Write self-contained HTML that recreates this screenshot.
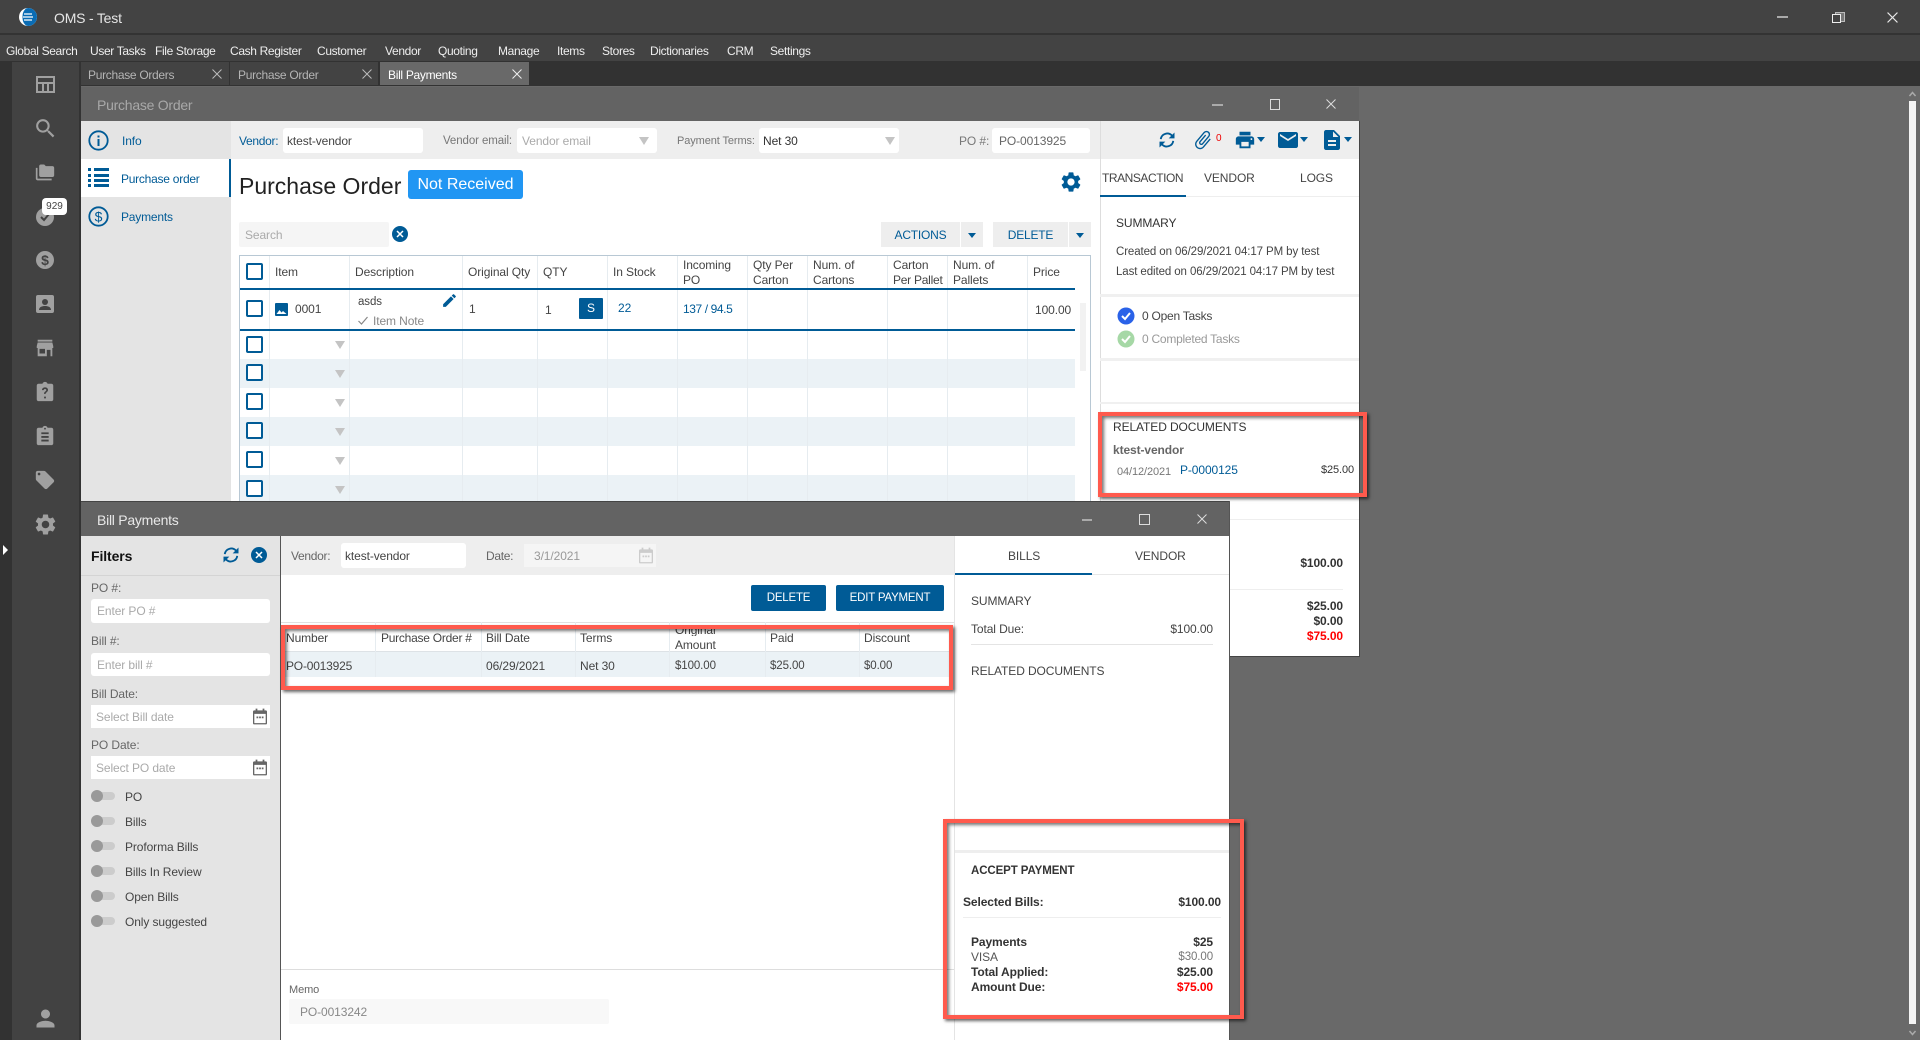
<!DOCTYPE html>
<html><head><meta charset="utf-8"><title>OMS - Test</title>
<style>
html,body{margin:0;padding:0;width:1920px;height:1040px;overflow:hidden;background:#696969}
body{position:relative;font:12px/16px "Liberation Sans",sans-serif;color:#333}
.b,.t,svg.i{position:absolute}
.t{white-space:nowrap;letter-spacing:-.1px}
.m{color:#eee;top:43px;letter-spacing:-.35px}
.tb{top:67px;color:#b5b5b5;letter-spacing:-.3px}
.w{background:#fff}
.inp{position:absolute;background:#fff;border-radius:3px}
.bl{color:#005b96}
.g{color:#999}
.h{color:#444}
.cb{position:absolute;left:246px;width:13px;height:13px;border:2.5px solid #005b96;border-radius:2px;background:#fff}
.v{position:absolute;width:1px;background:#e6ecf0}
.tri{position:absolute;width:0;height:0;border-left:5px solid transparent;border-right:5px solid transparent;border-top:8px solid #c4c4c4}
.car{position:absolute;width:0;height:0;border-left:4px solid transparent;border-right:4px solid transparent;border-top:5px solid #005b96}
.red{position:absolute;border:4px solid #ff5a4d;box-sizing:border-box;box-shadow:2px 2px 3px rgba(0,0,0,.6),inset 2px 2px 3px rgba(0,0,0,.55)}
.tg{position:absolute;left:91px;width:24px;height:8px;background:#ccc;border-radius:4px}
.tg:before{content:"";position:absolute;left:0;top:-2px;width:12px;height:12px;border-radius:6px;background:#999}
.btn{position:absolute;background:#005b96;color:#fff;text-align:center;line-height:27px;border-radius:2px;letter-spacing:-.2px}
.gb{position:absolute;background:#eee;color:#005b96;text-align:center;line-height:26px;letter-spacing:-.2px}
</style></head><body>
<svg width="0" height="0" style="position:absolute"><defs>
<symbol id="search" viewBox="0 0 24 24"><path d="M15.5 14h-.79l-.28-.27A6.47 6.47 0 0 0 16 9.5 6.5 6.5 0 1 0 9.5 16c1.61 0 3.09-.59 4.23-1.57l.27.28v.79l5 4.99L20.49 19l-4.99-5zm-6 0C7.01 14 5 11.99 5 9.5S7.01 5 9.5 5 14 7.01 14 9.5 11.99 14 9.5 14z"/></symbol>
<symbol id="folder" viewBox="0 0 24 24"><path d="M3 7H1v13c0 1.1.9 2 2 2h17v-2H3V7zm18-2h-8l-2-2H7c-1.1 0-2 .9-2 2v11c0 1.1.9 2 2 2h14c1.1 0 2-.9 2-2V7c0-1.1-.9-2-2-2z"/></symbol>
<symbol id="person" viewBox="0 0 24 24"><path d="M12 12c2.21 0 4-1.79 4-4s-1.79-4-4-4-4 1.79-4 4 1.79 4 4 4zm0 2c-2.67 0-8 1.34-8 4v2h16v-2c0-2.66-5.33-4-8-4z"/></symbol>
<symbol id="gear" viewBox="0 0 24 24"><path d="M19.14 12.94c.04-.3.06-.61.06-.94 0-.32-.02-.64-.07-.94l2.03-1.58a.49.49 0 0 0 .12-.61l-1.92-3.32a.488.488 0 0 0-.59-.22l-2.39.96c-.5-.38-1.03-.7-1.62-.94l-.36-2.54a.484.484 0 0 0-.48-.41h-3.84c-.24 0-.43.17-.47.41l-.36 2.54c-.59.24-1.13.57-1.62.94l-2.39-.96c-.22-.08-.47 0-.59.22L2.74 8.87c-.12.21-.08.47.12.61l2.03 1.58c-.05.3-.09.63-.09.94s.02.64.07.94l-2.03 1.58a.49.49 0 0 0-.12.61l1.92 3.32c.12.22.37.29.59.22l2.39-.96c.5.38 1.03.7 1.62.94l.36 2.54c.05.24.24.41.48.41h3.84c.24 0 .44-.17.47-.41l.36-2.54c.59-.24 1.13-.56 1.62-.94l2.39.96c.22.08.47 0 .59-.22l1.92-3.32c.12-.22.07-.47-.12-.61l-2.01-1.58zM12 15.6c-1.98 0-3.6-1.62-3.6-3.6s1.62-3.6 3.6-3.6 3.6 1.62 3.6 3.6-1.62 3.6-3.6 3.6z"/></symbol>
<symbol id="store" viewBox="0 0 24 24"><path d="M20 3H4v2h16V3zm1 9v-2l-1-4H4l-1 4v2h1v9h10v-7h4v7h2v-9h1zm-9 6H6v-5h6v5z"/></symbol>
<symbol id="clip" viewBox="0 0 24 24"><path d="M19 3h-4.18C14.4 1.84 13.3 1 12 1c-1.3 0-2.4.84-2.82 2H5c-1.1 0-2 .9-2 2v15c0 1.1.9 2 2 2h14c1.1 0 2-.9 2-2V5c0-1.1-.9-2-2-2zm-7 0c.55 0 1 .45 1 1s-.45 1-1 1-1-.45-1-1 .45-1 1-1zm4 15H8v-2h8v2zm0-4H8v-2h8v2zm0-4H8V8h8v2z"/></symbol>
<symbol id="clipq" viewBox="0 0 24 24"><path fill-rule="evenodd" d="M19 3h-4.18C14.4 1.84 13.3 1 12 1c-1.3 0-2.4.84-2.82 2H5c-1.1 0-2 .9-2 2v15c0 1.1.9 2 2 2h14c1.1 0 2-.9 2-2V5c0-1.1-.9-2-2-2zM11 17h2v2h-2zM12 7c-2 0-3.200 1.200-3.300 3h1.800c.1-.8.6-1.300 1.500-1.300s1.400.5 1.400 1.200c0 1.400-2.500 1.600-2.500 4.100h1.800c0-1.700 2.600-2.100 2.600-4.200C15.300 8.100 14 7 12 7z"/></symbol>
<symbol id="tag" viewBox="0 0 24 24"><path d="M21.41 11.58l-9-9C12.05 2.22 11.55 2 11 2H4c-1.1 0-2 .9-2 2v7c0 .55.22 1.05.59 1.42l9 9c.36.36.86.58 1.41.58.55 0 1.05-.22 1.41-.59l7-7c.37-.36.59-.86.59-1.41 0-.55-.23-1.06-.59-1.42zM5.5 7C4.67 7 4 6.33 4 5.500S4.670 4 5.500 4 7 4.670 7 5.500 6.330 7 5.500 7z"/></symbol>
<symbol id="print" viewBox="0 0 24 24"><path d="M19 8H5c-1.66 0-3 1.340-3 3v6h4v4h12v-4h4v-6c0-1.660-1.340-3-3-3zm-3 11H8v-5h8v5zm3-7c-.55 0-1-.45-1-1s.45-1 1-1 1 .45 1 1-.45 1-1 1zm-1-9H6v4h12V3z"/></symbol>
<symbol id="mail" viewBox="0 0 24 24"><path d="M20 4H4c-1.100 0-1.990.9-1.990 2L2 18c0 1.100.9 2 2 2h16c1.100 0 2-.9 2-2V6c0-1.100-.9-2-2-2zm0 4l-8 5-8-5V6l8 5 8-5v2z"/></symbol>
<symbol id="doc" viewBox="0 0 24 24"><path d="M14 2H6c-1.100 0-1.990.9-1.990 2L4 20c0 1.100.89 2 1.990 2H18c1.100 0 2-.9 2-2V8l-6-6zm2 16H8v-2h8v2zm0-4H8v-2h8v2zm-3-5V3.500L18.500 9H13z"/></symbol>
<symbol id="sync" viewBox="0 0 24 24"><path d="M4.500 11A7.800 7.800 0 0 1 18 6.800M19.500 13A7.800 7.800 0 0 1 6 17.200" fill="none" stroke="currentColor" stroke-width="2.200"/><path d="M21 3v7h-7zM3 21v-7h7z" fill="currentColor"/></symbol>
<symbol id="attach" viewBox="0 0 24 24"><path d="M16.500 6v11.500c0 2.210-1.790 4-4 4s-4-1.790-4-4V5c0-1.380 1.120-2.500 2.500-2.500s2.500 1.120 2.500 2.500v10.500c0 .55-.45 1-1 1s-1-.45-1-1V6H10v9.500c0 1.380 1.120 2.500 2.500 2.500s2.500-1.120 2.500-2.500V5c0-2.210-1.790-4-4-4S7 2.790 7 5v12.500c0 3.040 2.460 5.500 5.500 5.500s5.500-2.460 5.500-5.500V6h-1.500z"/></symbol>
<symbol id="edit" viewBox="0 0 24 24"><path d="M3 17.250V21h3.750L17.810 9.940l-3.750-3.750L3 17.250zM20.710 7.040a1 1 0 0 0 0-1.410l-2.340-2.340a1 1 0 0 0-1.410 0l-1.830 1.830 3.750 3.750 1.830-1.830z"/></symbol>
<symbol id="cal" viewBox="0 0 16 18"><path d="M3 0h2v2h6V0h2v2h1.500A1.500 1.500 0 0 1 16 3.500v13a1.500 1.500 0 0 1-1.500 1.500h-13A1.500 1.500 0 0 1 0 16.500v-13A1.500 1.500 0 0 1 1.500 2H3V0zM1.500 6v10.500h13V6h-13zM4 9h2v2H4zm3 0h2v2H7zm3 0h2v2h-2z"/></symbol>
<symbol id="x" viewBox="0 0 10 10"><path d="M.5.5l9 9M9.500.5l-9 9" stroke="currentColor" stroke-width="1" fill="none"/></symbol>
</defs></svg>

<!-- title bar -->
<div class="b" style="left:0;top:0;width:1920px;height:34px;background:#434343"></div>
<div class="b" style="left:0;top:33px;width:1920px;height:2px;background:#333"></div>
<svg class="i" style="left:18px;top:7px" width="20" height="20" viewBox="0 0 20 20"><circle cx="10" cy="10" r="9" fill="#fff"/><path d="M8 1.500A9 9 0 0 1 10 1a9 9 0 0 1 0 18 9 9 0 0 1-2-.5C5 16 4.500 13 4.500 10S5 4 8 1.500z" fill="#0a6cb4"/><path d="M6 7h8M5 10h10M6 13h8" stroke="#fff" stroke-width="1.200"/></svg>
<div class="t" style="left:54px;top:10px;font-size:14px;color:#e6e6e6;letter-spacing:-.2px">OMS - Test</div>
<div class="b" style="left:1777px;top:16px;width:11px;height:2px;background:#aaa"></div>
<div class="b" style="left:1835px;top:12px;width:8px;height:8px;border:1px solid #bbb;background:#777"></div>
<div class="b" style="left:1832px;top:14px;width:7px;height:7px;border:1.500px solid #eee;background:#434343"></div>
<svg class="i" style="left:1887px;top:12px;color:#e8e8e8" width="11" height="11"><use href="#x"/></svg>

<!-- menu -->
<div class="b" style="left:0;top:35px;width:1920px;height:26px;background:#434343"></div>
<div class="t m" style="left:6px">Global Search</div>
<div class="t m" style="left:90px">User Tasks</div>
<div class="t m" style="left:155px">File Storage</div>
<div class="t m" style="left:230px">Cash Register</div>
<div class="t m" style="left:317px">Customer</div>
<div class="t m" style="left:385px">Vendor</div>
<div class="t m" style="left:438px">Quoting</div>
<div class="t m" style="left:498px">Manage</div>
<div class="t m" style="left:557px">Items</div>
<div class="t m" style="left:602px">Stores</div>
<div class="t m" style="left:650px">Dictionaries</div>
<div class="t m" style="left:727px">CRM</div>
<div class="t m" style="left:770px">Settings</div>

<!-- tab band -->
<div class="b" style="left:0;top:61px;width:1920px;height:25px;background:#323232"></div>
<div class="b" style="left:80px;top:62px;width:149px;height:23px;background:#434343"></div>
<div class="b" style="left:230px;top:62px;width:148px;height:23px;background:#434343"></div>
<div class="b" style="left:380px;top:62px;width:149px;height:23px;background:#696969"></div>
<div class="t tb" style="left:88px">Purchase Orders</div>
<div class="t tb" style="left:238px">Purchase Order</div>
<div class="t tb" style="left:388px;color:#fff">Bill Payments</div>
<svg class="i" style="left:212px;top:69px;color:#bbb" width="10" height="10"><use href="#x"/></svg>
<svg class="i" style="left:362px;top:69px;color:#bbb" width="10" height="10"><use href="#x"/></svg>
<svg class="i" style="left:512px;top:69px;color:#eee" width="10" height="10"><use href="#x"/></svg>

<!-- rail -->
<div class="b" style="left:0;top:61px;width:12px;height:979px;background:#323232"></div>
<div class="b" style="left:12px;top:62px;width:68px;height:978px;background:#424242"></div>
<div class="b" style="left:79px;top:62px;width:2px;height:978px;background:#333"></div>
<svg class="i" style="left:36px;top:76px" width="19" height="17" viewBox="0 0 19 17"><path fill="#a0a0a0" fill-rule="evenodd" d="M0 0h19v17H0zM2 2v4h15V2zM2 8v7h4V8zm6 0v7h3V8zm5 0v7h4V8z"/></svg>
<svg class="i" style="left:33px;top:116px" width="25" height="25" fill="#a0a0a0"><use href="#search"/></svg>
<svg class="i" style="left:35px;top:162px" width="20" height="20" fill="#a0a0a0"><use href="#folder"/></svg>
<svg class="i" style="left:36px;top:208px" width="18" height="18" viewBox="0 0 18 18"><circle cx="9" cy="9" r="9" fill="#a0a0a0"/><path d="M5 9l3 3 5-6" stroke="#424242" stroke-width="2" fill="none"/></svg>
<div class="b" style="left:42px;top:198px;width:25px;height:17px;background:#fff;border-radius:4px;text-align:center;font-size:10px;line-height:17px;color:#444">929</div>
<svg class="i" style="left:36px;top:251px" width="18" height="18" viewBox="0 0 18 18"><circle cx="9" cy="9" r="9" fill="#a0a0a0"/><text x="9" y="14" text-anchor="middle" font-family="Liberation Sans" font-size="14" font-weight="bold" fill="#424242">$</text></svg>
<svg class="i" style="left:36px;top:295px" width="18" height="18" viewBox="0 0 18 18"><rect width="18" height="18" rx="2" fill="#a0a0a0"/><circle cx="9" cy="7" r="3" fill="#424242"/><path d="M3 15c0-3 3-4 6-4s6 1 6 4z" fill="#424242"/></svg>
<svg class="i" style="left:34px;top:337px" width="22" height="22" fill="#a0a0a0"><use href="#store"/></svg>
<svg class="i" style="left:34px;top:381px" width="22" height="22" fill="#a0a0a0"><use href="#clipq"/></svg>
<svg class="i" style="left:34px;top:425px" width="22" height="22" fill="#a0a0a0"><use href="#clip"/></svg>
<svg class="i" style="left:34px;top:469px" width="22" height="22" fill="#a0a0a0"><use href="#tag"/></svg>
<svg class="i" style="left:33px;top:512px" width="25" height="25" fill="#a0a0a0"><use href="#gear"/></svg>
<svg class="i" style="left:32px;top:1005px" width="27" height="27" fill="#a0a0a0"><use href="#person"/></svg>
<div class="b" style="left:3px;top:545px;width:0;height:0;border-top:5px solid transparent;border-bottom:5px solid transparent;border-left:5px solid #fff"></div>

<!-- page scrollbar -->
<div class="b" style="left:1909px;top:101px;width:7px;height:923px;background:#f4f4f4"></div>
<svg class="i" style="left:1909px;top:91px" width="7" height="6"><path d="M.5 5L3.500 1.500 6.500 5" stroke="#aaa" stroke-width="1.500" fill="none"/></svg>
<svg class="i" style="left:1909px;top:1030px" width="7" height="6"><path d="M.5 1L3.500 4.500 6.500 1" stroke="#aaa" stroke-width="1.500" fill="none"/></svg>

<!-- PO window -->
<div class="b" style="left:81px;top:87px;width:1278px;height:34px;background:#636363"></div>
<div class="t" style="left:97px;top:97px;font-size:14px;color:#a8a8a8;letter-spacing:-.25px">Purchase Order</div>
<div class="b" style="left:1212px;top:104px;width:11px;height:2px;background:#aaa"></div>
<div class="b" style="left:1270px;top:99px;width:8px;height:9px;border:1px solid #ddd"></div>
<svg class="i" style="left:1326px;top:99px;color:#ddd" width="10" height="10"><use href="#x"/></svg>

<div class="b" style="left:81px;top:121px;width:150px;height:380px;background:#e4e4e4"></div>
<div class="b" style="left:81px;top:159px;width:149px;height:38px;background:#fff"></div>
<div class="b" style="left:229px;top:159px;width:2px;height:38px;background:#005b96"></div>
<svg class="i" style="left:88px;top:130px" width="21" height="21" viewBox="0 0 21 21"><circle cx="10.500" cy="10.500" r="9.200" fill="none" stroke="#005b96" stroke-width="1.800"/><rect x="9.500" y="9" width="2" height="7" fill="#005b96"/><rect x="9.500" y="5.500" width="2" height="2" fill="#005b96"/></svg>
<svg class="i" style="left:88px;top:168px" width="21" height="20" viewBox="0 0 21 20"><path fill="#005b96" d="M0 0h3v3H0zm6 0h15v3H6zM0 6h3v3H0zm6 0h15v3H6zM0 11h3v3H0zm6 0h15v3H6zM0 16h3v3H0zm6 0h15v3H6z"/></svg>
<svg class="i" style="left:88px;top:206px" width="21" height="21" viewBox="0 0 21 21"><circle cx="10.500" cy="10.500" r="9.200" fill="none" stroke="#005b96" stroke-width="1.800"/><text x="10.500" y="15.500" text-anchor="middle" font-family="Liberation Sans" font-size="14" fill="#005b96">$</text></svg>
<div class="t bl" style="left:122px;top:133px">Info</div>
<div class="t bl" style="left:121px;top:171px;letter-spacing:-.25px">Purchase order</div>
<div class="t bl" style="left:121px;top:209px;letter-spacing:-.2px">Payments</div>

<div class="b w" style="left:231px;top:121px;width:1128px;height:536px"></div>
<div class="b" style="left:231px;top:121px;width:869px;height:38px;background:#eee"></div>
<div class="b" style="left:1100px;top:121px;width:259px;height:38px;background:#eee"></div>
<div class="b" style="left:1100px;top:121px;width:1px;height:380px;background:#ddd"></div>
<div class="t bl" style="left:239px;top:133px;letter-spacing:-.3px">Vendor:</div>
<div class="inp" style="left:283px;top:128px;width:140px;height:25px"></div>
<div class="t" style="left:287px;top:133px;color:#444">ktest-vendor</div>
<div class="t" style="left:443px;top:133px;color:#777;font-size:11.500px">Vendor email:</div>
<div class="inp" style="left:517px;top:128px;width:140px;height:25px"></div>
<div class="t" style="left:522px;top:133px;color:#aaa">Vendor email</div>
<div class="tri" style="left:639px;top:137px"></div>
<div class="t" style="left:677px;top:133px;color:#777;font-size:11px">Payment Terms:</div>
<div class="inp" style="left:759px;top:128px;width:140px;height:25px"></div>
<div class="t" style="left:763px;top:133px;color:#333">Net 30</div>
<div class="tri" style="left:885px;top:137px"></div>
<div class="t" style="left:959px;top:133px;color:#777">PO #:</div>
<div class="inp" style="left:992px;top:128px;width:98px;height:25px"></div>
<div class="t" style="left:999px;top:133px;color:#666">PO-0013925</div>

<svg class="i" style="left:1157px;top:130px;color:#005b96" width="20" height="20"><use href="#sync"/></svg>
<svg class="i" style="left:1192px;top:129px" width="22" height="22" fill="#005b96" viewBox="0 0 24 24"><use href="#attach" transform="rotate(40 12 12)"/></svg>
<div class="t" style="left:1216px;top:131px;font-size:10px;color:#e00">0</div>
<svg class="i" style="left:1234px;top:129px" width="22" height="22" fill="#005b96"><use href="#print"/></svg>
<div class="car" style="left:1257px;top:137px"></div>
<svg class="i" style="left:1276px;top:128px" width="24" height="24" fill="#005b96"><use href="#mail"/></svg>
<div class="car" style="left:1300px;top:137px"></div>
<svg class="i" style="left:1320px;top:128px" width="24" height="24" fill="#005b96"><use href="#doc"/></svg>
<div class="car" style="left:1344px;top:137px"></div>

<div class="t" style="left:239px;top:172px;font-size:23px;line-height:28px;color:#222;letter-spacing:0">Purchase Order</div>
<div class="b" style="left:408px;top:170px;width:115px;height:29px;background:#2196f3;border-radius:3px;color:#fff;font-size:16px;line-height:30px;text-align:center">Not Received</div>
<svg class="i" style="left:1059px;top:170px" width="24" height="24" fill="#005b96"><use href="#gear"/></svg>

<div class="b" style="left:239px;top:222px;width:150px;height:25px;background:#f5f5f5;border-radius:2px"></div>
<div class="t" style="left:245px;top:227px;color:#aaa">Search</div>
<svg class="i" style="left:392px;top:226px" width="16" height="16" viewBox="0 0 16 16"><circle cx="8" cy="8" r="8" fill="#005b96"/><path d="M5 5l6 6M11 5l-6 6" stroke="#fff" stroke-width="1.500"/></svg>
<div class="gb" style="left:881px;top:222px;width:79px;height:25px">ACTIONS</div>
<div class="gb" style="left:961px;top:222px;width:22px;height:25px"></div>
<div class="car" style="left:968px;top:233px"></div>
<div class="gb" style="left:993px;top:222px;width:75px;height:25px">DELETE</div>
<div class="gb" style="left:1069px;top:222px;width:22px;height:25px"></div>
<div class="car" style="left:1076px;top:233px"></div>

<!-- PO table -->
<div class="b" style="left:239px;top:255px;width:851px;height:1px;background:#b8c8d4"></div>
<div class="b" style="left:239px;top:255px;width:1px;height:246px;background:#b8c8d4"></div>
<div class="b" style="left:1090px;top:255px;width:1px;height:246px;background:#b8c8d4"></div>
<div class="b" style="left:240px;top:359px;width:835px;height:29px;background:#ebf2f6"></div>
<div class="b" style="left:240px;top:417px;width:835px;height:29px;background:#ebf2f6"></div>
<div class="b" style="left:240px;top:475px;width:835px;height:26px;background:#ebf2f6"></div>
<div class="v" style="left:269px;top:256px;height:245px"></div>
<div class="v" style="left:349px;top:256px;height:245px"></div>
<div class="v" style="left:462px;top:256px;height:245px"></div>
<div class="v" style="left:537px;top:256px;height:245px"></div>
<div class="v" style="left:607px;top:256px;height:245px"></div>
<div class="v" style="left:677px;top:256px;height:245px"></div>
<div class="v" style="left:747px;top:256px;height:245px"></div>
<div class="v" style="left:807px;top:256px;height:245px"></div>
<div class="v" style="left:887px;top:256px;height:245px"></div>
<div class="v" style="left:947px;top:256px;height:245px"></div>
<div class="v" style="left:1027px;top:256px;height:245px"></div>
<div class="b" style="left:240px;top:288px;width:835px;height:1.500px;background:#005b96"></div>
<div class="b" style="left:240px;top:329px;width:835px;height:1.500px;background:#005b96"></div>
<div class="b" style="left:1080px;top:303px;width:6px;height:68px;background:#f2f2f2"></div>

<div class="cb" style="top:263px"></div>
<div class="t h" style="left:275px;top:264px">Item</div>
<div class="t h" style="left:355px;top:264px">Description</div>
<div class="t h" style="left:468px;top:264px">Original Qty</div>
<div class="t h" style="left:543px;top:264px">QTY</div>
<div class="t h" style="left:613px;top:264px">In Stock</div>
<div class="t h" style="left:683px;top:257px">Incoming</div>
<div class="t h" style="left:683px;top:272px">PO</div>
<div class="t h" style="left:753px;top:257px">Qty Per</div>
<div class="t h" style="left:753px;top:272px">Carton</div>
<div class="t h" style="left:813px;top:257px">Num. of</div>
<div class="t h" style="left:813px;top:272px">Cartons</div>
<div class="t h" style="left:893px;top:257px">Carton</div>
<div class="t h" style="left:893px;top:272px;letter-spacing:-.25px">Per Pallet</div>
<div class="t h" style="left:953px;top:257px">Num. of</div>
<div class="t h" style="left:953px;top:272px">Pallets</div>
<div class="t h" style="left:1033px;top:264px">Price</div>

<div class="cb" style="top:300px"></div>
<svg class="i" style="left:275px;top:303px" width="13" height="13" viewBox="0 0 13 13"><rect width="13" height="13" rx="1" fill="#005b96"/><path d="M1.500 11l3-4 2 2.500 1.500-1.500 3.500 3z" fill="#fff"/></svg>
<div class="t h" style="left:295px;top:301px">0001</div>
<div class="t h" style="left:358px;top:294px;font-size:11.500px">asds</div>
<svg class="i" style="left:358px;top:316px" width="10" height="10"><path d="M.5 5l3 3 6-7" stroke="#888" stroke-width="1.200" fill="none"/></svg>
<div class="t" style="left:373px;top:313px;color:#888">Item Note</div>
<svg class="i" style="left:441px;top:292px" width="17" height="17" fill="#005b96"><use href="#edit"/></svg>
<div class="t h" style="left:469px;top:301px">1</div>
<div class="t h" style="left:545px;top:302px">1</div>
<div class="b" style="left:579px;top:298px;width:24px;height:21px;background:#005b96;border-radius:1px;color:#fff;text-align:center;line-height:21px">S</div>
<div class="t bl" style="left:618px;top:300px">22</div>
<div class="t bl" style="left:683px;top:301px;letter-spacing:-.4px">137 / 94.5</div>
<div class="t h" style="left:1035px;top:302px">100.00</div>

<div class="cb" style="top:336px"></div><div class="tri" style="left:335px;top:341px"></div>
<div class="cb" style="top:364px"></div><div class="tri" style="left:335px;top:370px"></div>
<div class="cb" style="top:393px"></div><div class="tri" style="left:335px;top:399px"></div>
<div class="cb" style="top:422px"></div><div class="tri" style="left:335px;top:428px"></div>
<div class="cb" style="top:451px"></div><div class="tri" style="left:335px;top:457px"></div>
<div class="cb" style="top:480px"></div><div class="tri" style="left:335px;top:486px"></div>

<!-- PO right column -->
<div class="t h" style="left:1102px;top:170px;letter-spacing:-.45px">TRANSACTION</div>
<div class="t h" style="left:1204px;top:170px">VENDOR</div>
<div class="t h" style="left:1300px;top:170px">LOGS</div>
<div class="b" style="left:1100px;top:196px;width:259px;height:1px;background:#eee"></div>
<div class="b" style="left:1100px;top:195px;width:86px;height:2px;background:#005b96"></div>
<div class="t" style="left:1116px;top:215px;color:#333">SUMMARY</div>
<div class="t" style="left:1116px;top:244px;color:#444;font-size:11.500px">Created on 06/29/2021 04:17 PM by test</div>
<div class="t" style="left:1116px;top:264px;color:#444;font-size:11.500px">Last edited on 06/29/2021 04:17 PM by test</div>
<div class="b" style="left:1100px;top:294px;width:259px;height:3px;background:#f0f0f0"></div>
<svg class="i" style="left:1117px;top:307px" width="18" height="18" viewBox="0 0 18 18"><circle cx="9" cy="9" r="8.500" fill="#2a62e8"/><path d="M5 9l3 3 5-6" stroke="#fff" stroke-width="2" fill="none"/></svg>
<div class="t h" style="left:1142px;top:308px;letter-spacing:-.25px">0 Open Tasks</div>
<svg class="i" style="left:1117px;top:330px" width="18" height="18" viewBox="0 0 18 18"><circle cx="9" cy="9" r="8.500" fill="#a6d8a6"/><path d="M5 9l3 3 5-6" stroke="#fff" stroke-width="2" fill="none"/></svg>
<div class="t g" style="left:1142px;top:331px;letter-spacing:-.25px">0 Completed Tasks</div>
<div class="b" style="left:1100px;top:358px;width:259px;height:3px;background:#f0f0f0"></div>
<div class="b" style="left:1100px;top:402px;width:259px;height:2px;background:#f0f0f0"></div>
<div class="t" style="left:1113px;top:419px;color:#333">RELATED DOCUMENTS</div>
<div class="t" style="left:1113px;top:442px;color:#666;font-weight:bold">ktest-vendor</div>
<div class="t" style="left:1117px;top:464px;color:#777;font-size:11px">04/12/2021</div>
<div class="t bl" style="left:1180px;top:462px">P-0000125</div>
<div class="t" style="right:566px;top:462px;color:#333;font-size:11px">$25.00</div>
<div class="b" style="left:1229px;top:519px;width:130px;height:1px;background:#eee"></div>
<div class="t" style="right:577px;top:555px;font-weight:bold;color:#333">$100.00</div>
<div class="b" style="left:1229px;top:589px;width:114px;height:1px;background:#eee"></div>
<div class="t" style="right:577px;top:598px;font-weight:bold;color:#333">$25.00</div>
<div class="t" style="right:577px;top:613px;font-weight:bold;color:#333">$0.00</div>
<div class="t" style="right:577px;top:628px;font-weight:bold;color:#f00">$75.00</div>
<div class="b" style="left:1229px;top:656px;width:131px;height:1px;background:#444"></div>
<div class="b" style="left:1359px;top:121px;width:1px;height:536px;background:#444"></div>
<div class="red" style="left:1098px;top:412px;width:269px;height:85px;border-color:#ff5a4d"></div>

<!-- Bill window -->
<div class="b" style="left:81px;top:501px;width:1148px;height:35px;background:#636363;border-top:1px solid #444;box-sizing:border-box"></div>
<div class="t" style="left:97px;top:512px;font-size:14px;color:#e8e8e8;letter-spacing:-.25px">Bill Payments</div>
<div class="b" style="left:1082px;top:519px;width:10px;height:1.500px;background:#aaa"></div>
<div class="b" style="left:1139px;top:514px;width:9px;height:9px;border:1.200px solid #ddd"></div>
<svg class="i" style="left:1197px;top:514px;color:#ddd" width="10" height="10"><use href="#x"/></svg>
<div class="b" style="left:1229px;top:501px;width:1px;height:539px;background:#555"></div>

<div class="b" style="left:81px;top:536px;width:199px;height:504px;background:#e4e4e4"></div>
<div class="b" style="left:280px;top:536px;width:1px;height:504px;background:#555"></div>
<div class="b w" style="left:281px;top:536px;width:948px;height:504px"></div>
<div class="b" style="left:281px;top:536px;width:674px;height:39px;background:#eee"></div>
<div class="b" style="left:954px;top:536px;width:1px;height:504px;background:#e4e4e4"></div>

<div class="t" style="left:91px;top:548px;font-size:14px;font-weight:bold;color:#111">Filters</div>
<svg class="i" style="left:221px;top:545px;color:#005b96" width="20" height="20"><use href="#sync"/></svg>
<svg class="i" style="left:251px;top:547px" width="16" height="16" viewBox="0 0 16 16"><circle cx="8" cy="8" r="8" fill="#005b96"/><path d="M5 5l6 6M11 5l-6 6" stroke="#fff" stroke-width="1.500"/></svg>
<div class="b" style="left:81px;top:575px;width:199px;height:1px;background:#d4d4d4"></div>
<div class="t" style="left:91px;top:580px;color:#666">PO #:</div>
<div class="inp" style="left:91px;top:599px;width:179px;height:24px"></div>
<div class="t" style="left:97px;top:603px;color:#aaa">Enter PO #</div>
<div class="t" style="left:91px;top:633px;color:#666">Bill #:</div>
<div class="inp" style="left:91px;top:653px;width:179px;height:23px"></div>
<div class="t" style="left:97px;top:657px;color:#aaa">Enter bill #</div>
<div class="t" style="left:91px;top:686px;color:#666">Bill Date:</div>
<div class="b w" style="left:91px;top:705px;width:179px;height:23px"></div>
<div class="t" style="left:96px;top:709px;color:#aaa">Select Bill date</div>
<svg class="i" style="left:253px;top:708px" width="14" height="17" fill="#666"><use href="#cal"/></svg>
<div class="t" style="left:91px;top:737px;color:#666">PO Date:</div>
<div class="b w" style="left:91px;top:756px;width:179px;height:23px"></div>
<div class="t" style="left:96px;top:760px;color:#aaa">Select PO date</div>
<svg class="i" style="left:253px;top:759px" width="14" height="17" fill="#666"><use href="#cal"/></svg>
<div class="tg" style="top:792px"></div><div class="t h" style="left:125px;top:789px">PO</div>
<div class="tg" style="top:817px"></div><div class="t h" style="left:125px;top:814px">Bills</div>
<div class="tg" style="top:842px"></div><div class="t h" style="left:125px;top:839px">Proforma Bills</div>
<div class="tg" style="top:867px"></div><div class="t h" style="left:125px;top:864px">Bills In Review</div>
<div class="tg" style="top:892px"></div><div class="t h" style="left:125px;top:889px">Open Bills</div>
<div class="tg" style="top:917px"></div><div class="t h" style="left:125px;top:914px">Only suggested</div>

<div class="t" style="left:291px;top:548px;color:#666;letter-spacing:-.3px">Vendor:</div>
<div class="inp" style="left:341px;top:543px;width:125px;height:25px"></div>
<div class="t" style="left:345px;top:548px;color:#444">ktest-vendor</div>
<div class="t" style="left:486px;top:548px;color:#666;letter-spacing:-.3px">Date:</div>
<div class="b" style="left:524px;top:544px;width:132px;height:23px;background:#f5f5f5"></div>
<div class="t" style="left:534px;top:548px;color:#999">3/1/2021</div>
<svg class="i" style="left:639px;top:547px" width="14" height="17" fill="#ccc"><use href="#cal"/></svg>
<div class="btn" style="left:751px;top:585px;width:75px;height:26px;font-size:11.500px">DELETE</div>
<div class="btn" style="left:836px;top:585px;width:108px;height:26px;font-size:11.500px">EDIT PAYMENT</div>

<div class="b" style="left:281px;top:622px;width:673px;height:1px;background:#e0e0e0"></div>
<div class="b" style="left:281px;top:652px;width:669px;height:25px;background:#ebf2f6"></div>
<div class="b" style="left:281px;top:651px;width:669px;height:1px;background:#dde2e6"></div>
<div class="v" style="left:375px;top:622px;height:55px"></div>
<div class="v" style="left:481px;top:622px;height:55px"></div>
<div class="v" style="left:575px;top:622px;height:55px"></div>
<div class="v" style="left:669px;top:622px;height:55px"></div>
<div class="v" style="left:765px;top:622px;height:55px"></div>
<div class="v" style="left:859px;top:622px;height:55px"></div>
<div class="t h" style="left:286px;top:630px">Number</div>
<div class="t h" style="left:381px;top:630px;letter-spacing:-.25px">Purchase Order #</div>
<div class="t h" style="left:486px;top:630px">Bill Date</div>
<div class="t h" style="left:580px;top:630px">Terms</div>
<div class="b" style="left:675px;top:625px;width:80px;height:11px;overflow:hidden"><div class="t h" style="left:0;top:-3px">Original</div></div>
<div class="t h" style="left:675px;top:637px">Amount</div>
<div class="t h" style="left:770px;top:630px">Paid</div>
<div class="t h" style="left:864px;top:630px">Discount</div>
<div class="t h" style="left:286px;top:658px;letter-spacing:-.2px">PO-0013925</div>
<div class="t h" style="left:486px;top:658px">06/29/2021</div>
<div class="t h" style="left:580px;top:658px">Net 30</div>
<div class="t h" style="left:675px;top:658px;font-size:11.500px">$100.00</div>
<div class="t h" style="left:770px;top:658px;font-size:11.500px">$25.00</div>
<div class="t h" style="left:864px;top:658px;font-size:11.500px">$0.00</div>
<div class="red" style="left:281px;top:625px;width:672px;height:65px"></div>

<div class="b" style="left:281px;top:969px;width:673px;height:1px;background:#ddd"></div>
<div class="t" style="left:289px;top:982px;color:#666;font-size:11px">Memo</div>
<div class="b" style="left:289px;top:999px;width:320px;height:25px;background:#f8f8f8;border-radius:2px"></div>
<div class="t" style="left:300px;top:1004px;color:#888">PO-0013242</div>

<div class="t h" style="left:1008px;top:548px">BILLS</div>
<div class="t h" style="left:1135px;top:548px">VENDOR</div>
<div class="b" style="left:955px;top:574px;width:274px;height:1px;background:#e8e8e8"></div>
<div class="b" style="left:955px;top:573px;width:137px;height:2px;background:#005b96"></div>
<div class="t h" style="left:971px;top:593px">SUMMARY</div>
<div class="t h" style="left:971px;top:621px">Total Due:</div>
<div class="t h" style="right:707px;top:621px">$100.00</div>
<div class="b" style="left:971px;top:644px;width:242px;height:1px;background:#e4e4e4"></div>
<div class="t h" style="left:971px;top:663px">RELATED DOCUMENTS</div>
<div class="b" style="left:955px;top:850px;width:274px;height:3px;background:#eee"></div>
<div class="t" style="left:971px;top:863px;font-weight:bold;font-size:11.500px;color:#333">ACCEPT PAYMENT</div>
<div class="t" style="left:963px;top:894px;font-weight:bold;color:#333">Selected Bills:</div>
<div class="t" style="right:699px;top:894px;font-weight:bold;color:#333">$100.00</div>
<div class="b" style="left:963px;top:917px;width:258px;height:1px;background:#eee"></div>
<div class="t" style="left:971px;top:934px;font-weight:bold;color:#333">Payments</div>
<div class="t" style="right:707px;top:934px;font-weight:bold;color:#333">$25</div>
<div class="t" style="left:971px;top:949px;color:#555">VISA</div>
<div class="t" style="right:707px;top:949px;color:#777;font-size:11.500px">$30.00</div>
<div class="t" style="left:971px;top:964px;font-weight:bold;color:#333">Total Applied:</div>
<div class="t" style="right:707px;top:964px;font-weight:bold;color:#333">$25.00</div>
<div class="t" style="left:971px;top:979px;font-weight:bold;color:#333">Amount Due:</div>
<div class="t" style="right:707px;top:979px;font-weight:bold;color:#f00">$75.00</div>
<div class="red" style="left:943px;top:819px;width:301px;height:200px"></div>
</body></html>
